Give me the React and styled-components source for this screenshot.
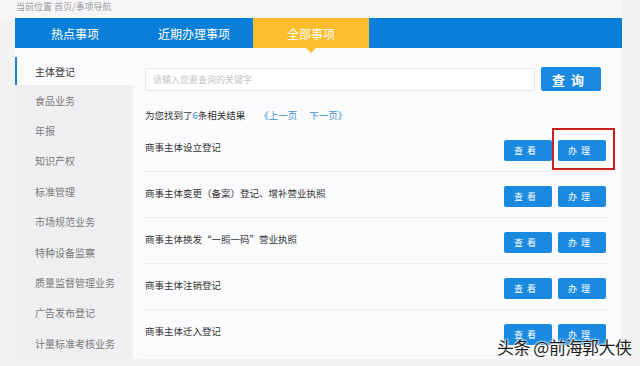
import React from 'react';
import styled, { createGlobalStyle } from 'styled-components';

const GlobalStyle = createGlobalStyle`
  body {
    margin: 0;
    background: #f2f2f5;
    font-family: "Noto Sans CJK SC", "Noto Sans", sans-serif;
  }
`;

const Page = styled.div`
  width: 640px;
  height: 366px;
  overflow: hidden;
  position: relative;
`;

const Frame = styled.div`
  margin-left: 15px;
  width: 607px;
  background: #fbfbfd;
`;

const Crumb = styled.div`
  height: 18px;
  line-height: 14px;
  font-size: 9px;
  color: #9a9a9a;
  background: #f6f6f8;
  padding-left: 16px;
  width: 606px;
`;

const TabBar = styled.div`
  display: flex;
  height: 30px;
  background: #0a7fd9;
`;

const Tab = styled.div`
  position: relative;
  width: ${p => p.$w}px;
  display: flex;
  align-items: center;
  justify-content: center;
  font-size: 12px;
  color: #fff;
  background: ${p => (p.$active ? '#fbbd2b' : 'transparent')};

  ${p => p.$active && `
    &::after {
      content: '';
      position: absolute;
      left: 50%;
      bottom: -5px;
      margin-left: -5px;
      border-left: 5px solid transparent;
      border-right: 5px solid transparent;
      border-top: 5px solid #fbbd2b;
    }
  `}
`;

const Body = styled.div`
  display: flex;
  padding-top: 9px;
`;

const Side = styled.div`
  width: 118px;
  display: flex;
  flex-direction: column;
`;

const SideItem = styled.div`
  height: ${p => (p.$active ? 28 : 30.4)}px;
  display: flex;
  align-items: center;
  padding-left: 18px;
  font-size: 10px;
  color: ${p => (p.$active ? '#333' : '#7a7a7a')};
  background: ${p => (p.$active ? '#fbfbfd' : '#efeff1')};
  border-left: 2px solid ${p => (p.$active ? '#1780d8' : 'transparent')};
`;

const Main = styled.div`
  flex: 1;
  padding: 10px 15px 0 12px;
  display: flex;
  flex-direction: column;
`;

const SearchRow = styled.div`
  display: flex;
  gap: 6px;
  align-items: center;
`;

const SearchInput = styled.input`
  width: 390px;
  height: 23px;
  box-sizing: border-box;
  border: 1px solid #e8e8ec;
  border-radius: 2px;
  background: #fff;
  padding: 0 7px;
  font-size: 9px;
  font-family: inherit;
  outline: none;
  &::placeholder { color: #c4c4c8; }
`;

const SearchBtn = styled.button`
  width: 60px;
  height: 24px;
  border: 0;
  border-radius: 2px;
  background: #1a8ae0;
  color: #fff;
  font-family: inherit;
  font-size: 13px;
  font-weight: 700;
  letter-spacing: 6px;
  padding-left: 6px;
`;

const Summary = styled.div`
  margin-top: 17px;
  height: 14px;
  display: flex;
  align-items: center;
  font-size: 9.5px;
  color: #333;
`;

const Blue = styled.span`
  color: #3b90d4;
`;

const Pager = styled.span`
  color: #3b90d4;
  margin-left: ${p => p.$gap}px;
`;

const List = styled.div`
  margin-top: 4px;
  display: flex;
  flex-direction: column;
`;

const Row = styled.div`
  height: 46px;
  box-sizing: border-box;
  border-bottom: 1px solid #ececef;
  display: flex;
  align-items: center;
  justify-content: space-between;
`;

const RowTitle = styled.div`
  font-size: 9.5px;
  color: #333;
  padding-bottom: 3px;
`;

const Actions = styled.div`
  display: flex;
  align-items: center;
  gap: 6px;
  padding-right: 1px;
  margin-top: 3px;
`;

const ActionWrap = styled.div`
  position: relative;
  display: flex;
`;

const ActionBtn = styled.button`
  width: 48px;
  height: 21px;
  border: 0;
  border-radius: 2px;
  background: #1a8ae0;
  color: #fff;
  font-family: inherit;
  font-size: 9px;
  letter-spacing: 4px;
  padding-left: 4px;
`;

const Mark = styled.div`
  position: absolute;
  left: -6px;
  top: -12px;
  right: -9px;
  bottom: -9px;
  border: 2px solid #cc1f22;
`;

const Watermark = styled.div`
  position: absolute;
  left: 497px;
  top: 334px;
  font-size: 17px;
  color: #1b1b1b;
  letter-spacing: -0.5px;
  text-shadow: 0 0 2px #fff, 0 0 2px #fff, 0 0 3px #fff;
`;

const tabs = [
  { label: '热点事项', w: 120 },
  { label: '近期办理事项', w: 118 },
  { label: '全部事项', w: 116, active: true },
];

const sideItems = [
  '主体登记', '食品业务', '年报', '知识产权', '标准管理',
  '市场规范业务', '特种设备监察', '质量监督管理业务', '广告发布登记', '计量标准考核业务',
];

const rows = [
  '商事主体设立登记',
  '商事主体变更（备案）登记、增补营业执照',
  '商事主体换发“一照一码”营业执照',
  '商事主体注销登记',
  '商事主体迁入登记',
];

export default function App() {
  return (
    <Page>
      <GlobalStyle />
      <Crumb>当前位置 首页/事项导航</Crumb>
      <Frame>
        <TabBar>
          {tabs.map(t => (
            <Tab key={t.label} $w={t.w} $active={t.active}>{t.label}</Tab>
          ))}
        </TabBar>
        <Body>
          <Side>
            {sideItems.map((s, i) => (
              <SideItem key={s} $active={i === 0}>{s}</SideItem>
            ))}
          </Side>
          <Main>
            <SearchRow>
              <SearchInput placeholder="请输入您要查询的关键字" />
              <SearchBtn>查询</SearchBtn>
            </SearchRow>
            <Summary>
              为您找到了<Blue>6</Blue>条相关结果
              <Pager $gap={14}>《上一页</Pager>
              <Pager $gap={12}>下一页》</Pager>
            </Summary>
            <List>
              {rows.map((r, i) => (
                <Row key={r}>
                  <RowTitle>{r}</RowTitle>
                  <Actions>
                    <ActionBtn>查看</ActionBtn>
                    <ActionWrap>
                      <ActionBtn>办理</ActionBtn>
                      {i === 0 && <Mark />}
                    </ActionWrap>
                  </Actions>
                </Row>
              ))}
            </List>
          </Main>
        </Body>
      </Frame>
      <Watermark>头条 @前海郭大侠</Watermark>
    </Page>
  );
}
